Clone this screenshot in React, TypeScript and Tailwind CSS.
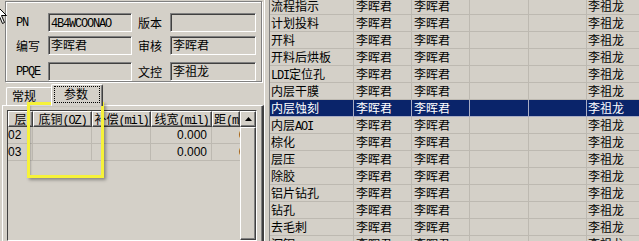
import React from "react";

const cjk = "font-['Noto_Sans_CJK_SC',sans-serif]";

// ASCII runs look like the SimSun half-width glyphs: 6px monospace
function Txt({ s }: { s: string }) {
  const parts = s.split(/([\x20-\x7e]+)/).filter(Boolean);
  return (
    <>
      {parts.map((p, i) =>
        /^[\x20-\x7e]+$/.test(p) ? (
          <span key={i} className="font-['Liberation_Mono',monospace] text-[12px] tracking-[-1.2px]">
            {p}
          </span>
        ) : (
          <span key={i}>{p}</span>
        )
      )}
    </>
  );
}

function Field({ className, value }: { className: string; value?: string }) {
  return (
    <div
      className={`${className} h-[19px] border border-t-[#808080] border-l-[#808080] border-b-white border-r-white shadow-[inset_1px_1px_0_#404040] pl-[2px] text-[12px] leading-[16px] whitespace-nowrap overflow-hidden`}
    >
      {value && <Txt s={value} />}
    </div>
  );
}

function InfoRow({ l1, v1, l2, v2, className }: { l1: string; v1?: string; l2: string; v2?: string; className: string }) {
  return (
    <div className={`flex items-center ${className}`}>
      <div className="w-[42px] pl-[10px] text-[12px] leading-[19px]">
        <Txt s={l1} />
      </div>
      <Field className="w-[84px]" value={v1} />
      <div className="w-[38px] pl-[6px] text-[12px] leading-[19px]">{l2}</div>
      <Field className="w-[86px]" value={v2} />
    </div>
  );
}

const headCell =
  "h-[16px] shrink-0 border border-t-white border-l-white border-b-[#404040] border-r-[#404040] shadow-[inset_-1px_-1px_0_#808080] text-[12px] leading-[14px] whitespace-nowrap overflow-hidden";

const paramRows = ["02", "03"];

const flowRows = [
  "流程指示",
  "计划投料",
  "开料",
  "开料后烘板",
  "LDI定位孔",
  "内层干膜",
  "内层蚀刻",
  "内层AOI",
  "棕化",
  "层压",
  "除胶",
  "铝片钻孔",
  "钻孔",
  "去毛刺",
  "沉铜",
];

function ParamsGrid() {
  return (
    <div className="ml-[4px] mt-[4px] w-[250px] flex-1 border border-t-[#404040] border-l-[#404040] border-b-white border-r-white flex overflow-hidden">
      <div className="w-[232px] shrink-0 flex flex-col overflow-hidden">
        <div className="flex">
          <div className={`${headCell} w-[25px] text-center`}>层</div>
          <div className={`${headCell} w-[59px] text-center`}>
            <Txt s="底铜(OZ)" />
          </div>
          <div className={`${headCell} w-[59px] text-center`}>
            <Txt s="补偿(mil)" />
          </div>
          <div className={`${headCell} w-[61px] text-center`}>
            <Txt s="线宽(mil)" />
          </div>
          <div className={`${headCell} w-[28px] pl-[1px]`}>
            <Txt s="距(mil)" />
          </div>
        </div>
        {paramRows.map((r) => (
          <div key={r} className="flex h-[17px] border-b border-[#bdb9b1] font-['Liberation_Sans',sans-serif] text-[12px] leading-[16px]">
            <div className="w-[25px] shrink-0 border-r border-[#bdb9b1]">{r}</div>
            <div className="w-[59px] shrink-0 border-r border-[#bdb9b1]" />
            <div className="w-[59px] shrink-0 border-r border-[#bdb9b1]" />
            <div className="w-[61px] shrink-0 border-r border-[#bdb9b1] pr-[4px] text-right">0.000</div>
            <div className="w-[28px] shrink-0 overflow-hidden whitespace-nowrap pl-[27px]">0.000</div>
          </div>
        ))}
      </div>
      {/* vertical scrollbar */}
      <div className="w-[16px] shrink-0 flex flex-col">
        <div className="h-[16px] border border-t-white border-l-white border-b-[#404040] border-r-[#404040] shadow-[inset_-1px_-1px_0_#808080] flex items-center justify-center">
          <svg width="7" height="4" viewBox="0 0 7 4">
            <path d="M3.5 0 L7 4 L0 4 Z" fill="#000" />
          </svg>
        </div>
        <div className="flex-1 border border-t-white border-l-white border-b-[#404040] border-r-[#404040] shadow-[inset_-1px_-1px_0_#808080]" />
      </div>
    </div>
  );
}

function FlowRow({ name, selected }: { name: string; selected: boolean }) {
  const line = selected ? "border-[#a9adc4]" : "border-[#bdb9b1]";
  return (
    <div className={`flex h-[17px] border-b ${line} ${selected ? "bg-[#0a246a] text-white" : ""} text-[12px] leading-[16px] whitespace-nowrap`}>
      <div className={`w-[84px] shrink-0 border-r ${line} pl-[1px]`}>
        <Txt s={name} />
      </div>
      <div className={`w-[58px] shrink-0 border-r ${line} pl-[2px]`}>李晖君</div>
      <div className={`w-[58px] shrink-0 border-r ${line} pl-[2px]`}>李晖君</div>
      <div className={`w-[59px] shrink-0 border-r ${line}`} />
      <div className={`w-[58px] shrink-0 border-r ${line}`} />
      <div className="flex-1 pl-[1px]">李祖龙</div>
    </div>
  );
}

export default function App() {
  return (
    <div className={`relative w-[639px] h-[241px] overflow-hidden bg-[#d4d0c8] text-black flex ${cjk}`}>
      {/* left panel */}
      <div className="w-[264px] h-full shrink-0 flex flex-col">
        <div className="ml-[5px] mt-[1px] w-[257px] h-[81px] shrink-0 border border-[#808080] shadow-[inset_1px_1px_0_#fff,1px_1px_0_#fff] pt-[9px]">
          <InfoRow className="" l1="PN" v1="4B4WCOONAO" l2="版本" />
          <InfoRow className="mt-[3px]" l1="编写" v1="李晖君" l2="审核" v2="李晖君" />
          <InfoRow className="mt-[5px]" l1="PPQE" l2="文控" v2="李祖龙" />
        </div>
        {/* tab strip */}
        <div className="ml-[2px] mt-[2px] h-[21px] shrink-0 flex items-end pl-[4px]">
          <div className="w-[46px] h-[18px] border-l border-t border-r border-l-white border-t-white border-r-[#404040] rounded-t-[2px] text-[12px] leading-[16px] pl-[5px]">
            常规
          </div>
          <div className="relative z-10 -ml-[1px] mb-[-1px] w-[52px] h-[22px] border-l border-t border-r border-l-white border-t-white border-r-[#404040] shadow-[inset_-1px_0_0_#808080] rounded-t-[2px] bg-[#d4d0c8] pt-[1px] px-[2px]">
            <div className="h-[17px] border border-dotted border-black text-[12px] leading-[14px] pl-[9px]">参数</div>
          </div>
        </div>
        {/* tab page */}
        <div className="ml-[2px] w-[262px] flex-1 flex flex-col border-l border-t border-r-2 border-l-white border-t-white border-r-[#404040] shadow-[inset_-1px_0_0_#808080]">
          <ParamsGrid />
        </div>
      </div>
      {/* splitter */}
      <div className="w-[6px] h-full shrink-0 border-l border-r border-l-white border-r-[#808080]" />
      {/* right grid */}
      <div className="flex-1 h-full overflow-hidden">
        <div className="-mt-[2px]">
          {flowRows.map((r) => (
            <FlowRow key={r} name={r} selected={r === "内层蚀刻"} />
          ))}
        </div>
      </div>

      {/* yellow annotation box */}
      <div className="absolute left-[27px] top-[102px] w-[77px] h-[76px] border-[3px] border-[#f6f23a] shadow-[2px_2px_3px_rgba(0,0,0,0.35),inset_1px_1px_2px_rgba(0,0,0,0.2)] pointer-events-none" />

      {/* mouse cursor */}
      <svg className="absolute left-[-5px] top-[4px]" width="14" height="22" viewBox="0 0 14 22">
        <path d="M0.5 0.5 L0.5 16.5 L4.5 12.5 L7.5 19.5 L9.5 18.5 L6.5 11.5 L11.5 11.5 Z" fill="#fff" stroke="#000" strokeWidth="1" />
      </svg>
    </div>
  );
}
